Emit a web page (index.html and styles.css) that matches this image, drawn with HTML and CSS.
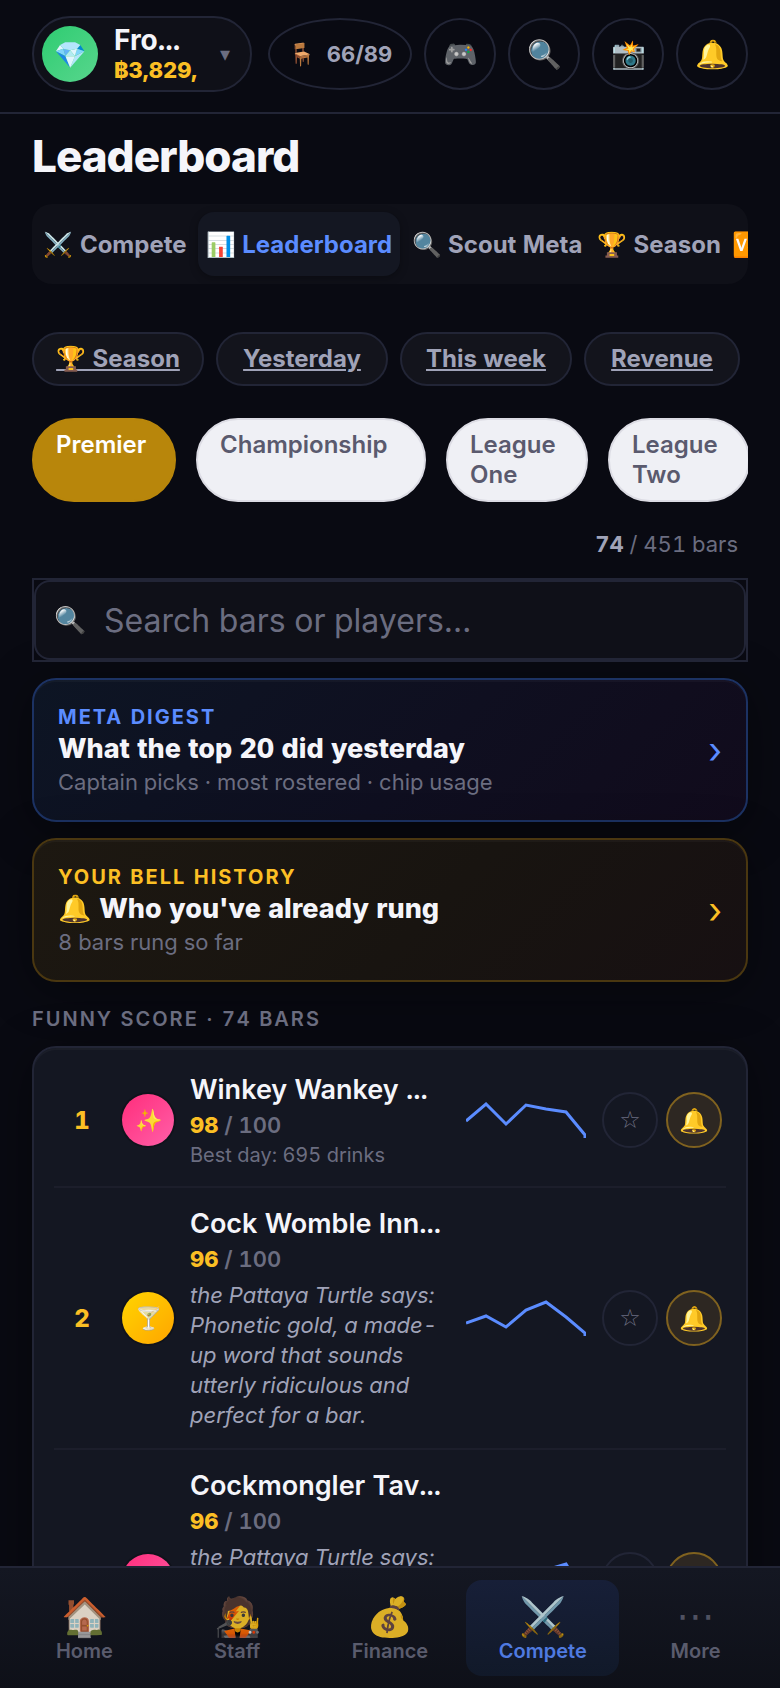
FILE: index.html
```html
<!DOCTYPE html>
<html lang="en">
<head>
    <meta charset="UTF-8">
    <meta name="viewport" content="width=device-width, initial-scale=1.0">
    <title>Leaderboard</title>
    <link rel="stylesheet" href="styles.css">
</head>
<body>
    <header class="topbar">
        <button class="profile" type="button">
            <span class="profile-avatar">💎</span>
            <span class="profile-text">
                <span class="profile-name">Fro...</span>
                <span class="profile-cash">฿3,829,</span>
            </span>
            <span class="caret">▾</span>
        </button>
        <button class="seats" type="button"><span class="seats-icon">🪑</span>66/89</button>
        <div class="top-actions">
            <button class="round-btn" type="button" aria-label="Games">🎮</button>
            <button class="round-btn" type="button" aria-label="Search">🔍</button>
            <button class="round-btn" type="button" aria-label="Snapshot">📸</button>
            <button class="round-btn" type="button" aria-label="Notifications">🔔</button>
        </div>
    </header>

    <main class="page">
        <h1>Leaderboard</h1>

        <div class="tabs">
            <button class="tab tab-md" type="button">⚔️ Compete</button>
            <button class="tab tab-xl active" type="button">📊 Leaderboard</button>
            <button class="tab tab-lg" type="button">🔍 Scout Meta</button>
            <button class="tab" type="button">🏆 Season</button>
            <button class="tab tab-icon" type="button">🆚</button>
        </div>

        <nav class="chips">
            <a class="chip" href="#season">🏆 Season</a>
            <a class="chip" href="#yesterday">Yesterday</a>
            <a class="chip" href="#week">This week</a>
            <a class="chip chip-sm" href="#revenue">Revenue</a>
        </nav>

        <div class="tiers">
            <button class="tier active" type="button">Premier</button>
            <button class="tier tier-wide" type="button">Championship</button>
            <button class="tier" type="button">League<br>One</button>
            <button class="tier" type="button">League<br>Two</button>
        </div>

        <p class="count"><strong>74</strong> / 451 bars</p>

        <div class="search">
            <label class="search-icon" for="search">🔍</label>
            <input id="search" type="text" placeholder="Search bars or players…">
        </div>

        <a class="promo promo-blue" href="#digest">
            <span class="promo-text">
                <span class="promo-label">META DIGEST</span>
                <span class="promo-title">What the top 20 did yesterday</span>
                <span class="promo-sub">Captain picks · most rostered · chip usage</span>
            </span>
            <span class="promo-arrow">›</span>
        </a>

        <a class="promo promo-gold" href="#bells">
            <span class="promo-text">
                <span class="promo-label">YOUR BELL HISTORY</span>
                <span class="promo-title">🔔 Who you've already rung</span>
                <span class="promo-sub">8 bars rung so far</span>
            </span>
            <span class="promo-arrow">›</span>
        </a>

        <h2>FUNNY SCORE · 74 BARS</h2>

        <div class="list">
            <div class="row">
                <span class="rank">1</span>
                <span class="avatar pink">✨</span>
                <div class="info">
                    <div class="name">Winkey Wankey ...</div>
                    <div class="score"><strong>98</strong> / 100</div>
                    <div class="best">Best day: 695 drinks</div>
                </div>
                <svg class="spark" viewBox="0 0 120 36">
                    <polyline points="0,19 20,2 40,22 60,3 80,7 100,10 119,33 119,37"/>
                </svg>
                <div class="actions">
                    <button class="star" type="button" aria-label="Favourite">☆</button>
                    <button class="bell" type="button" aria-label="Ring bell">🔔</button>
                </div>
            </div>

            <div class="row">
                <span class="rank">2</span>
                <span class="avatar gold">🍸</span>
                <div class="info">
                    <div class="name">Cock Womble Inn...</div>
                    <div class="score"><strong>96</strong> / 100</div>
                    <div class="quote">the Pattaya Turtle says: Phonetic gold, a made-up word that sounds utterly ridiculous and perfect for a bar.</div>
                </div>
                <svg class="spark" viewBox="0 0 120 36">
                    <polyline points="0,23 20,16 40,27 60,10 80,2 100,17 119,33 119,37"/>
                </svg>
                <div class="actions">
                    <button class="star" type="button" aria-label="Favourite">☆</button>
                    <button class="bell" type="button" aria-label="Ring bell">🔔</button>
                </div>
            </div>

            <div class="row">
                <span class="rank">3</span>
                <span class="avatar pink">✨</span>
                <div class="info">
                    <div class="name">Cockmongler Tav...</div>
                    <div class="score"><strong>96</strong> / 100</div>
                    <div class="quote">the Pattaya Turtle says:</div>
                </div>
                <svg class="spark" viewBox="0 0 120 36">
                    <polyline points="0,23 20,18 40,26 60,12 80,8 100,2 119,33 119,37"/>
                </svg>
                <div class="actions">
                    <button class="star" type="button" aria-label="Favourite">☆</button>
                    <button class="bell" type="button" aria-label="Ring bell">🔔</button>
                </div>
            </div>
        </div>
    </main>

    <nav class="bottom-nav">
        <a class="nav-item" href="#home"><span class="nav-icon">🏠</span>Home</a>
        <a class="nav-item" href="#staff"><span class="nav-icon">🧑‍🎤</span>Staff</a>
        <a class="nav-item" href="#finance"><span class="nav-icon">💰</span>Finance</a>
        <a class="nav-item active" href="#compete"><span class="nav-icon">⚔️</span>Compete</a>
        <a class="nav-item" href="#more"><span class="nav-icon dots">⋯</span>More</a>
    </nav>
</body>
</html>
```

FILE: styles.css
```css
* {
    margin: 0;
    padding: 0;
    box-sizing: border-box;
}

html {
    scrollbar-width: none;
}

body {
    font-family: Inter, sans-serif;
    font-size: 24px;
    background: #090a12;
    color: #f5f5fa;
    font-variant-numeric: tabular-nums;
    padding-bottom: 122px;
}

button {
    font: inherit;
    color: inherit;
    background: none;
    border: none;
    font-variant-numeric: inherit;
    cursor: pointer;
}

a {
    color: inherit;
    text-decoration: none;
}

/* Top bar */
.topbar {
    display: flex;
    align-items: center;
    padding: 16px 32px 20px;
    border-bottom: 2px solid #222536;
}

.profile {
    display: flex;
    align-items: center;
    flex: 1;
    min-width: 0;
    height: 76px;
    padding: 0 20px 0 8px;
    margin-right: 16px;
    border: 2px solid #222536;
    border-radius: 38px;
    background: #0f1018;
    text-align: left;
}

.profile-avatar {
    flex: none;
    display: flex;
    align-items: center;
    justify-content: center;
    width: 56px;
    height: 56px;
    margin-right: 16px;
    border-radius: 50%;
    background: linear-gradient(135deg, #2ecc71, #58d68d);
    font-size: 26px;
}

.profile-text {
    flex: 1;
    min-width: 0;
}

.profile-name {
    display: block;
    white-space: nowrap;
    font-size: 28px;
    font-weight: 700;
    line-height: 32px;
}

.profile-cash {
    display: block;
    white-space: nowrap;
    color: #fbbf24;
    font-size: 22px;
    font-weight: 800;
    line-height: 28px;
}

.caret {
    color: #6b6d80;
    font-size: 20px;
}

.seats {
    display: flex;
    align-items: center;
    justify-content: center;
    gap: 12px;
    width: 144px;
    height: 72px;
    margin-right: 12px;
    border: 2px solid #222536;
    border-radius: 50%;
    color: #a0a3b8;
    font-size: 22px;
    font-weight: 700;
    white-space: nowrap;
}

.top-actions {
    display: flex;
    gap: 12px;
}

.round-btn {
    width: 72px;
    height: 72px;
    border: 2px solid #222536;
    border-radius: 50%;
    font-size: 28px;
}

/* Page */
.page {
    padding: 16px 32px 32px;
}

h1 {
    font-size: 44px;
    font-weight: 800;
    line-height: 52px;
    letter-spacing: -1px;
}

.tabs {
    display: flex;
    gap: 8px;
    margin-top: 22px;
    padding: 8px;
    height: 80px;
    border-radius: 20px;
    background: #0f1018;
    overflow: hidden;
}

.tab {
    flex: none;
    min-width: 130px;
    border-radius: 16px;
    color: #a0a3b8;
    font-weight: 700;
    white-space: nowrap;
}

.tab-md {
    min-width: 150px;
}

.tab-lg {
    min-width: 178px;
}

.tab-xl {
    min-width: 202px;
}

.tab-icon {
    min-width: 0;
}

.tab.active {
    background: #141722;
    color: #5b8cff;
    box-shadow: 0 2px 8px rgba(0, 0, 0, 0.3);
}

.chips {
    display: flex;
    gap: 12px;
    margin-top: 48px;
}

.chip {
    min-width: 172px;
    padding: 10px 20px;
    border: 2px solid #222536;
    border-radius: 27px;
    background: #13141c;
    color: #a0a3b8;
    font-weight: 700;
    line-height: 30px;
    text-align: center;
    text-decoration: underline;
    white-space: nowrap;
}

.chip-sm {
    min-width: 156px;
}

.tiers {
    display: flex;
    gap: 20px;
    margin-top: 32px;
    overflow: hidden;
}

.tier {
    display: flex;
    flex: none;
    min-width: 142px;
    padding: 10px 22px;
    border: 2px solid #dcdce4;
    border-radius: 42px;
    background: #eff0f5;
    color: #5a5a6e;
    font-weight: 600;
    line-height: 30px;
    text-align: left;
}

.tier-wide {
    min-width: 230px;
}

.tier.active {
    min-width: 144px;
    border-color: #b8860b;
    background: #b8860b;
    color: #fff;
}

.count {
    margin: 28px 10px 20px;
    color: #6b6d80;
    font-size: 22px;
    line-height: 28px;
    text-align: right;
}

.count strong {
    color: #a0a3b8;
    font-weight: 700;
}

.search {
    position: relative;
    border: 2px solid #222536;
}

.search-icon {
    position: absolute;
    left: 20px;
    top: 24px;
    font-size: 26px;
    line-height: 32px;
}

.search input {
    display: block;
    width: 100%;
    height: 80px;
    padding: 0 20px 0 68px;
    border: 2px solid #222536;
    border-radius: 16px;
    background: #0f1018;
    color: #f5f5fa;
    font: inherit;
    font-size: 32px;
    outline: none;
}

.search input::placeholder {
    color: #6b6d80;
    opacity: 1;
}

/* Promo cards */
.promo {
    display: flex;
    align-items: center;
    justify-content: space-between;
    margin-top: 16px;
    padding: 22px 24px;
    border: 2px solid #1c3263;
    border-radius: 24px;
    box-shadow: 0 8px 48px rgba(0, 0, 0, 0.4), inset 0 2px 0 rgba(255, 255, 255, 0.03);
}

.promo-blue {
    background: linear-gradient(135deg, #0d1524, #0f0f20 55%, #110b1c);
    color: #5b8cff;
}

.promo-gold {
    border-color: #4a3710;
    background: linear-gradient(135deg, #1d1811, #181410 55%, #171012);
    color: #fbbf24;
}

.promo-text > span {
    display: block;
}

.promo-label {
    font-size: 20px;
    font-weight: 700;
    letter-spacing: 2px;
    line-height: 30px;
}

.promo-title {
    color: #f5f5fa;
    font-size: 27px;
    font-weight: 800;
    line-height: 34px;
}

.promo-sub {
    color: #6b6d80;
    font-size: 22px;
    line-height: 32px;
}

.promo-arrow {
    font-size: 36px;
    line-height: 40px;
}

h2 {
    margin: 24px 0 14px;
    color: #6b6d80;
    font-size: 20px;
    font-weight: 600;
    letter-spacing: 2px;
    line-height: 26px;
}

/* Ranking list */
.list {
    padding: 6px 20px;
    border: 2px solid #222536;
    border-radius: 24px;
    background: #141722;
    box-shadow: 0 8px 48px rgba(0, 0, 0, 0.4), inset 0 2px 0 rgba(255, 255, 255, 0.03);
}

.row {
    display: flex;
    align-items: center;
    gap: 16px;
    padding: 18px 4px;
    border-bottom: 2px solid #1c1e2b;
}

.rank {
    flex: none;
    width: 48px;
    color: #fbbf24;
    font-weight: 800;
    text-align: center;
}

.avatar {
    flex: none;
    display: flex;
    align-items: center;
    justify-content: center;
    width: 52px;
    height: 52px;
    border-radius: 50%;
    box-shadow: 0 0 0 2px rgba(0, 0, 0, 0.2);
    font-size: 22px;
}

.pink {
    background: linear-gradient(135deg, #ff2d7b, #ff5fa8);
}

.gold {
    background: linear-gradient(135deg, #ffd500, #ffa500);
}

.info {
    flex: 1;
    min-width: 0;
}

.name {
    overflow: hidden;
    text-overflow: ellipsis;
    white-space: nowrap;
    font-size: 27px;
    font-weight: 600;
    line-height: 36px;
}

.score {
    color: #6b6d80;
    font-size: 22px;
    font-weight: 600;
    line-height: 34px;
}

.score strong {
    color: #fbbf24;
    font-weight: 800;
}

.best {
    color: #6b6d80;
    font-size: 20px;
    line-height: 26px;
}

.quote {
    min-height: 150px;
    margin-top: 4px;
    color: #a0a3b8;
    font-size: 22px;
    font-style: italic;
    line-height: 30px;
}

.spark {
    flex: none;
    width: 120px;
    height: 36px;
    fill: none;
    stroke: #5b8cff;
    stroke-width: 3;
}

.actions {
    display: flex;
    gap: 8px;
}

.star,
.bell {
    width: 56px;
    height: 56px;
    border: 2px solid #222536;
    border-radius: 50%;
    color: #6b6d80;
    font-size: 24px;
}

.star {
    font-family: "DejaVu Sans", sans-serif;
}

.bell {
    border-color: #80621f;
    background: #2d2722;
}

/* Bottom navigation */
.bottom-nav {
    position: fixed;
    left: 0;
    right: 0;
    bottom: 0;
    display: flex;
    padding: 12px 8px;
    border-top: 2px solid #222536;
    background: linear-gradient(#141722, #0e1018);
}

.nav-item {
    flex: 1;
    display: flex;
    flex-direction: column;
    align-items: center;
    height: 96px;
    padding-top: 12px;
    border-radius: 16px;
    color: #5a5c6d;
    font-size: 20px;
    font-weight: 600;
    line-height: 22px;
}

.nav-item.active {
    background: linear-gradient(#171f38, #111929);
    color: #4f7ae0;
}

.nav-icon {
    font-size: 38px;
    line-height: 48px;
    opacity: 0.85;
}

.dots {
    font-family: "DejaVu Sans", sans-serif;
    font-weight: 400;
}
```
